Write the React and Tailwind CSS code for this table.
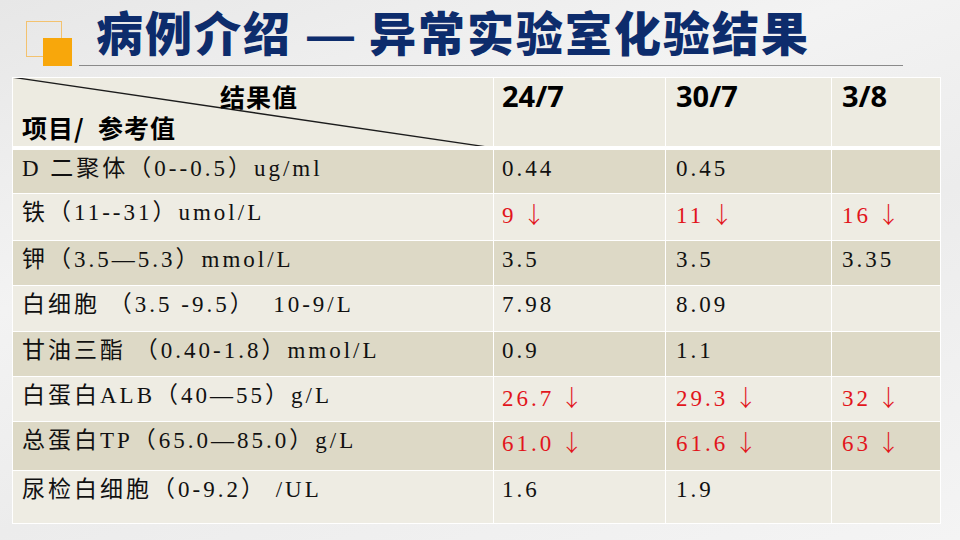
import React from 'react';

const COLS = [
  { w: 'w-[480px]', pad: 'pl-[9px]' },
  { w: 'w-[171px]', pad: 'pl-[8px]' },
  { w: 'w-[165px]', pad: 'pl-[10px]' },
  { w: 'w-[108px]', pad: 'pl-[10px]' }
];

const DATES = ['24/7', '30/7', '3/8'];

// low values get a red down arrow
const ROWS = [
  { h: 'h-[43px]', dark: true, label: 'D 二聚体（0--0.5）ug/ml', values: ['0.44', '0.45', ''] },
  { h: 'h-[46px]', dark: false, label: '铁（11--31）umol/L', values: ['9', '11', '16'], low: true },
  { h: 'h-[44px]', dark: true, label: '钾（3.5—5.3）mmol/L', values: ['3.5', '3.5', '3.35'] },
  { h: 'h-[45px]', dark: false, label: '白细胞 （3.5 -9.5）  10-9/L', values: ['7.98', '8.09', ''] },
  { h: 'h-[44px]', dark: true, label: '甘油三酯 （0.40-1.8）mmol/L', values: ['0.9', '1.1', ''] },
  { h: 'h-[44px]', dark: false, label: '白蛋白ALB（40—55）g/L', values: ['26.7', '29.3', '32'], low: true },
  { h: 'h-[48px]', dark: true, label: '总蛋白TP（65.0—85.0）g/L', values: ['61.0', '61.6', '63'], low: true },
  { h: 'h-[52px]', dark: false, label: '尿检白细胞（0-9.2） /UL', values: ['1.6', '1.9', ''] }
];

const Logo = () => (
  <svg width="46" height="45" viewBox="0 0 46 45" className="shrink-0">
    <rect x="0.5" y="0.5" width="35" height="35" fill="none" stroke="#f3c26f" strokeWidth="1" />
    <rect x="17" y="17" width="29" height="28" fill="#f8a70b" />
  </svg>
);

const HeaderRow = () => (
  <div className="flex gap-px mb-[3px]">
    <div className={`${COLS[0].w} h-[68px] bg-[#edebe1] relative`}>
      <svg className="absolute inset-0" width="480" height="68" viewBox="0 0 480 68">
        <line x1="-2" y1="-1" x2="481" y2="70" stroke="#1c1c1c" strokeWidth="1.3" />
      </svg>
      <div className="relative pt-[3px] font-['Noto_Sans_CJK_SC',sans-serif] font-bold text-[25px] leading-[31px] tracking-[1px] text-black whitespace-pre">
        <div className="pl-[207px]">结果值</div>
        <div className="pl-[9px]">项目/  参考值</div>
      </div>
    </div>
    {DATES.map((date, i) => (
      <div
        key={date}
        className={`${COLS[i + 1].w} ${COLS[i + 1].pad} h-[68px] bg-[#edebe1] font-['Noto_Sans',sans-serif] font-bold text-[29px] leading-[36px] tracking-normal text-black`}
      >
        {date}
      </div>
    ))}
  </div>
);

const DataRow = ({ row }) => {
  const bg = row.dark ? 'bg-[#ddd9c6]' : 'bg-[#eeece3]';
  return (
    <div className="flex gap-px">
      <div className={`${COLS[0].w} ${COLS[0].pad} ${row.h} ${bg} pt-[4px] text-[#111] whitespace-pre`}>
        {row.label}
      </div>
      {row.values.map((value, i) => (
        <div
          key={i}
          className={`${COLS[i + 1].w} ${COLS[i + 1].pad} ${row.h} ${bg} pt-[4px] whitespace-pre ${
            row.low ? 'text-[#e2151c]' : 'text-[#111]'
          }`}
        >
          {value}
          {row.low && value && (
            <span className="ml-[6px] font-['Noto_Sans_CJK_SC',sans-serif] font-light tracking-normal">↓</span>
          )}
        </div>
      ))}
    </div>
  );
};

export default function App() {
  return (
    <div className="w-[960px] h-[540px] bg-[linear-gradient(160deg,#e7e7e7_0%,#f3f3f3_35%,#ececec_60%,#f4f4f4_100%)]">
      <div className="flex items-end h-[66px] pl-[26px]">
        <Logo />
        <div className="ml-[7px] w-[824px] border-b border-[#8a8a8a] pb-[2px]">
          <h1 className="pl-[17px] font-['Liberation_Sans','Noto_Sans_CJK_SC',sans-serif] font-black text-[47px] leading-[56px] tracking-[2px] text-[#0d2c6c] whitespace-nowrap">
            病例介绍
            <span className="inline-block mx-[15px] font-bold tracking-normal">—</span>
            异常实验室化验结果
          </h1>
        </div>
      </div>

      <div className="mt-[11px] ml-[12px] w-[929px] bg-white p-px flex flex-col gap-px font-['Liberation_Serif','Noto_Sans_CJK_SC',serif] text-[23px] leading-[30px] tracking-[3px]">
        <HeaderRow />
        {ROWS.map((row, i) => (
          <DataRow key={i} row={row} />
        ))}
      </div>
    </div>
  );
}
